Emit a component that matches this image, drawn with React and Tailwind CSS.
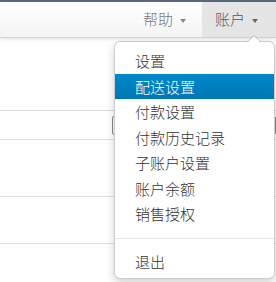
import React from 'react'

const menuItems = ['设置', '配送设置', '付款设置', '付款历史记录', '子账户设置', '账户余额', '销售授权']

function Caret({ color }) {
  return <span className={`inline-block w-0 h-0 border-x-[3.5px] border-x-transparent border-t-[4px] ${color} ml-[7px] mt-[2px]`} />
}

export default function App() {
  return (
    <div
      className="relative w-[276px] h-[282px] overflow-hidden bg-white text-[15px] font-light"
      style={{ fontFamily: '"Noto Sans CJK SC", "Noto Sans", sans-serif' }}
    >
      {/* top bar */}
      <div className="h-[2px] bg-[#5b6b7b]" />
      <nav className="relative z-10 h-[36px] flex justify-end bg-gradient-to-b from-[#ffffff] to-[#f4f4f4] border-b border-[#d4d4d4] shadow-[0_1px_4px_rgba(0,0,0,0.12)]">
        <div className="flex items-center pl-[13px] pr-[16px] text-[#777]">
          帮助
          <Caret color="border-t-[#888]" />
        </div>
        <div className="flex items-center pl-[13px] pr-[15px] w-[74px] bg-[#e5e5e5] text-[#555]">
          账户
          <Caret color="border-t-[#666]" />
        </div>
      </nav>

      {/* page body */}
      <div className="h-[73px] border-b border-[#ddd]" />
      <div className="h-[29px] border-b border-[#ddd] pt-[5px] pl-[112px]">
        <div className="h-[19px] border border-[#888] rounded-[2px]" />
      </div>
      <div className="h-[57px] border-b border-[#ddd]" />
      <div className="h-[47px] border-b border-[#ddd]" />

      {/* dropdown */}
      <div className="absolute z-20 left-[114px] top-[41px] w-[161px] bg-white border border-black/20 rounded-[6px] shadow-[0_4px_10px_rgba(0,0,0,0.18)] pt-[6px] pb-[4px]">
        <span className="absolute -top-[7px] right-[13px] w-0 h-0 border-x-[7px] border-x-transparent border-b-[7px] border-b-black/20" />
        <span className="absolute -top-[6px] right-[14px] w-0 h-0 border-x-[6px] border-x-transparent border-b-[6px] border-b-white" />
        {menuItems.map((item, i) => (
          <div
            key={item}
            className={`leading-[25.5px] pl-[20px] ${i === 1 ? 'bg-gradient-to-b from-[#0088cc] to-[#0077b3] text-white' : 'text-[#333]'}`}
          >
            {item}
          </div>
        ))}
        <div className="h-[1px] bg-[#e5e5e5] mt-[11px] mb-[10px]" />
        <div className="leading-[25.5px] pl-[20px] text-[#333]">退出</div>
      </div>
    </div>
  )
}
